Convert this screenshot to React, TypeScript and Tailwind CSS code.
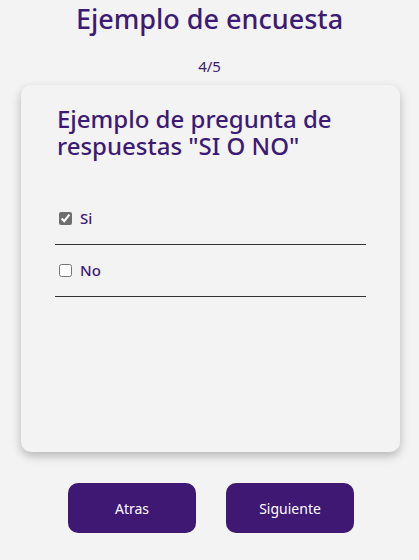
import React, { useState } from 'react';

const App = () => {
  // answers for the yes/no question
  const [answers, setAnswers] = useState({ si: true, no: false });

  return (
    <div className="min-h-screen bg-[#f3f3f3] font-['Noto_Sans','Open_Sans',sans-serif]">
      <h1 className="text-center text-[27px] font-medium leading-[38px] text-[#3d1a74]">
        Ejemplo de encuesta
      </h1>
      <p className="text-center text-[15px] leading-5 text-[#3d1a74] mt-[18px]">4/5</p>

      {/* Question card */}
      <div className="ml-[21px] mr-[19px] mt-[9px] h-[367px] rounded-[10px] bg-[#f3f3f3] shadow-[0_4px_10px_rgba(0,0,0,0.25)] px-[34px] pt-[20px]">
        <h2 className="px-[2px] text-[24px] font-medium leading-[27px] text-[#3d1a74]">
          Ejemplo de pregunta de respuestas "SI O NO"
        </h2>
        <div className="mt-[34px]">
          <label className="flex h-[52px] items-center gap-[8px] border-b border-[#333] pl-[4px] text-[15px] font-medium text-[#3d1a74]">
            <input
              type="checkbox"
              checked={answers.si}
              onChange={() => setAnswers({ ...answers, si: !answers.si })}
              className="m-0 h-[13px] w-[13px] accent-[#6e6e6e]"
            />
            Si
          </label>
          <label className="flex h-[52px] items-center gap-[8px] border-b border-[#333] pl-[4px] text-[15px] font-medium text-[#3d1a74]">
            <input
              type="checkbox"
              checked={answers.no}
              onChange={() => setAnswers({ ...answers, no: !answers.no })}
              className="m-0 h-[13px] w-[13px] accent-[#6e6e6e]"
            />
            No
          </label>
        </div>
      </div>

      {/* Navigation */}
      <div className="mt-[31px] flex justify-center gap-[30px] pl-[3px]">
        <button className="h-[50px] w-[128px] rounded-[10px] bg-[#3e1873] text-[14px] text-white">
          Atras
        </button>
        <button className="h-[50px] w-[128px] rounded-[10px] bg-[#3e1873] text-[14px] text-white">
          Siguiente
        </button>
      </div>
    </div>
  );
};

export default App;
